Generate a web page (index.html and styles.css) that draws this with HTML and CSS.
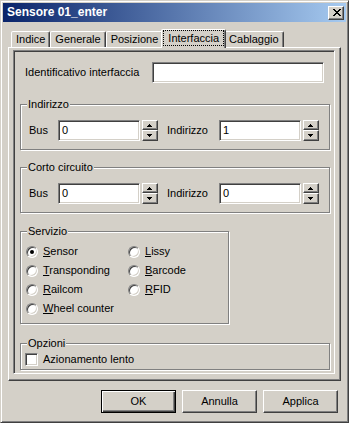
FILE: index.html
```html
<!DOCTYPE html>
<html lang="it">
<head>
<meta charset="utf-8">
<title>Sensore 01_enter</title>
<link rel="stylesheet" href="styles.css">
</head>
<body>
<div class="window">
  <div class="titlebar">
    <span class="title">Sensore 01_enter</span>
    <span class="close" aria-label="Chiudi">
      <svg width="8" height="7" viewBox="0 0 8 7"><path d="M0 0h2v1H0zM6 0h2v1H6zM1 1h2v1H1zM5 1h2v1H5zM2 2h4v1H2zM3 3h2v1H3zM2 4h4v1H2zM1 5h2v1H1zM5 5h2v1H5zM0 6h2v1H0zM6 6h2v1H6z" fill="#000"/></svg>
    </span>
  </div>
  <div class="body">
    <div class="tabs">
      <div class="tab">Indice</div>
      <div class="tab">Generale</div>
      <div class="tab">Posizione</div>
      <div class="tab active"><span class="focus">Interfaccia</span></div>
      <div class="tab">Cablaggio</div>
    </div>
    <div class="panel">
      <div class="page">
        <div class="id-row">
          <span class="id-label">Identificativo interfaccia</span>
          <span class="edit wide"></span>
        </div>

        <div class="group g-addr">
          <span class="group-title">Indirizzo</span>
          <div class="spin-row">
            <span class="lbl-bus">Bus</span>
            <span class="edit">0</span>
            <span class="spin">
              <span class="spin-btn up"><svg width="5" height="3" viewBox="0 0 5 3"><path d="M2 0h1v1h1v1h1v1H0V2h1V1h1z" fill="#000"/></svg></span>
              <span class="spin-btn down"><svg width="5" height="3" viewBox="0 0 5 3"><path d="M0 0h5v1H4v1H3v1H2V2H1V1H0z" fill="#000"/></svg></span>
            </span>
            <span class="lbl-ind">Indirizzo</span>
            <span class="edit">1</span>
            <span class="spin">
              <span class="spin-btn up"><svg width="5" height="3" viewBox="0 0 5 3"><path d="M2 0h1v1h1v1h1v1H0V2h1V1h1z" fill="#000"/></svg></span>
              <span class="spin-btn down"><svg width="5" height="3" viewBox="0 0 5 3"><path d="M0 0h5v1H4v1H3v1H2V2H1V1H0z" fill="#000"/></svg></span>
            </span>
          </div>
        </div>

        <div class="group g-short">
          <span class="group-title">Corto circuito</span>
          <div class="spin-row">
            <span class="lbl-bus">Bus</span>
            <span class="edit">0</span>
            <span class="spin">
              <span class="spin-btn up"><svg width="5" height="3" viewBox="0 0 5 3"><path d="M2 0h1v1h1v1h1v1H0V2h1V1h1z" fill="#000"/></svg></span>
              <span class="spin-btn down"><svg width="5" height="3" viewBox="0 0 5 3"><path d="M0 0h5v1H4v1H3v1H2V2H1V1H0z" fill="#000"/></svg></span>
            </span>
            <span class="lbl-ind">Indirizzo</span>
            <span class="edit">0</span>
            <span class="spin">
              <span class="spin-btn up"><svg width="5" height="3" viewBox="0 0 5 3"><path d="M2 0h1v1h1v1h1v1H0V2h1V1h1z" fill="#000"/></svg></span>
              <span class="spin-btn down"><svg width="5" height="3" viewBox="0 0 5 3"><path d="M0 0h5v1H4v1H3v1H2V2H1V1H0z" fill="#000"/></svg></span>
            </span>
          </div>
        </div>

        <div class="group g-serv">
          <span class="group-title">Servizio</span>
          <div class="radios">
            <label class="opt"><span class="radio checked"></span><span><u>S</u>ensor</span></label>
            <label class="opt"><span class="radio"></span><span><u>T</u>ransponding</span></label>
            <label class="opt"><span class="radio"></span><span><u>R</u>ailcom</span></label>
            <label class="opt"><span class="radio"></span><span><u>W</u>heel counter</span></label>
            <label class="opt"><span class="radio"></span><span><u>L</u>issy</span></label>
            <label class="opt"><span class="radio"></span><span><u>B</u>arcode</span></label>
            <label class="opt"><span class="radio"></span><span><u>R</u>FID</span></label>
          </div>
        </div>

        <div class="group g-opt">
          <span class="group-title">Opzioni</span>
          <label class="opt check-row"><span class="checkbox"></span><span>Azionamento lento</span></label>
        </div>
      </div>
    </div>
    <div class="buttons">
      <span class="btn default">OK</span>
      <span class="btn">Annulla</span>
      <span class="btn">Applica</span>
    </div>
  </div>
</div>
</body>
</html>
```

FILE: styles.css
```css
* { box-sizing: border-box; }

html, body {
  margin: 0;
  padding: 0;
  background: #d4d0c8;
}

body {
  font-family: "Liberation Sans", Arial, sans-serif;
  font-size: 11px;
  line-height: 13px;
  color: #000;
}

.window {
  width: 349px;
  height: 423px;
  border: 1px solid;
  border-color: #d4d0c8 #404040 #404040 #d4d0c8;
  box-shadow: inset 1px 1px #fff, inset -1px -1px #808080;
  padding: 2px;
  background: #d4d0c8;
  display: flex;
  flex-direction: column;
}

/* ---------- title bar ---------- */
.titlebar {
  height: 19px;
  flex: none;
  background: linear-gradient(to right, #0a246a, #a6caf0);
  display: flex;
  align-items: center;
  padding: 0 2px 0 4px;
  color: #fff;
  font-weight: bold;
  font-size: 12px;
}

.title {
  flex: 1;
  white-space: nowrap;
}

.close {
  width: 16px;
  height: 14px;
  background: #d4d0c8;
  border: 1px solid;
  border-color: #fff #404040 #404040 #fff;
  box-shadow: inset -1px -1px #808080;
  display: flex;
  align-items: center;
  justify-content: center;
  padding-left: 1px;
}

.close svg { display: block; }

/* ---------- body ---------- */
.body {
  flex: 1;
  padding: 7px 5px 0;
  display: flex;
  flex-direction: column;
}

.tabs {
  display: flex;
  align-items: flex-end;
  height: 18px;
  padding-left: 3px;
  flex: none;
}

.tab {
  height: 16px;
  padding: 0 4px;
  border: 1px solid;
  border-bottom: 0;
  border-color: #fff #404040 transparent #fff;
  border-radius: 2px 2px 0 0;
  box-shadow: inset -1px 0 #808080;
  line-height: 14px;
  white-space: nowrap;
  background: #d4d0c8;
}

.tab.active {
  height: 19px;
  margin: 0 -2px -1px;
  padding: 0 1px;
  position: relative;
  z-index: 1;
}

.focus {
  display: block;
  border: 1px dotted #000;
  padding: 0 4px;
  height: 16px;
  line-height: 14px;
}

.panel {
  height: 334px;
  flex: none;
  border: 1px solid;
  border-color: #fff #404040 #404040 #fff;
  box-shadow: inset -1px -1px #808080;
  padding: 2px 5px 6px 4px;
  display: flex;
}

.page {
  flex: 1;
  border: 1px solid;
  border-color: #808080 #fff #fff #808080;
  box-shadow: inset 1px 1px #404040, inset -1px -1px #d4d0c8;
}

/* ---------- controls ---------- */
.edit {
  display: flex;
  align-items: center;
  width: 82px;
  height: 21px;
  padding: 0 3px;
  background: #fff;
  border: 1px solid;
  border-color: #808080 #fff #fff #808080;
  box-shadow: inset 1px 1px #404040, inset -1px -1px #d4d0c8;
  flex: none;
}

.edit.wide { width: 172px; }

.id-row {
  display: flex;
  align-items: center;
  height: 21px;
  margin: 11px 0 0 11px;
}

.id-label { width: 127px; white-space: nowrap; }

.group {
  position: relative;
  margin-left: 6px;
  width: 310px;
  border: 1px solid #808080;
  box-shadow: inset 1px 1px #fff, 1px 1px #fff;
}

.group-title {
  position: absolute;
  top: -7px;
  left: 6px;
  padding: 0 1px;
  background: #d4d0c8;
  line-height: 13px;
  white-space: nowrap;
}

.g-addr { margin-top: 21px; padding: 15px 0 8px 8px; }
.g-short { margin-top: 17px; padding: 15px 0 8px 8px; }
.g-serv { margin-top: 18px; width: 209px; padding: 10px 0 5px 5px; }
.g-opt { margin-top: 19px; padding: 9px 0 3px 4px; }

.spin-row {
  display: flex;
  align-items: center;
  height: 21px;
}

.lbl-bus { width: 29px; }
.lbl-ind { width: 52px; margin-left: 9px; }

.spin {
  display: flex;
  flex-direction: column;
  width: 16px;
  height: 21px;
  margin-left: 2px;
  flex: none;
}

.spin-btn {
  border: 1px solid;
  border-color: #fff #404040 #404040 #fff;
  box-shadow: inset -1px -1px #808080;
  display: flex;
  align-items: center;
  justify-content: center;
  padding-right: 1px;
}

.spin-btn.up { height: 10px; }
.spin-btn.down { height: 11px; }
.spin-btn svg { display: block; }

.radios {
  display: grid;
  grid-template-columns: 102px auto;
  grid-template-rows: repeat(4, 19px);
  grid-auto-flow: column;
}

.opt {
  display: flex;
  align-items: center;
  gap: 5px;
  white-space: nowrap;
}

.radio {
  width: 12px;
  height: 12px;
  flex: none;
  border-radius: 50%;
  background: #fff;
  border: 1px solid;
  border-color: #808080 #fff #fff #808080;
  box-shadow: inset 1px 1px #404040, inset -1px -1px #d4d0c8;
  display: flex;
  align-items: center;
  justify-content: center;
}

.radio.checked::after {
  content: "";
  width: 4px;
  height: 4px;
  border-radius: 50%;
  background: #000;
}

.check-row { height: 13px; }

.checkbox {
  width: 13px;
  height: 13px;
  flex: none;
  background: #fff;
  border: 1px solid;
  border-color: #808080 #fff #fff #808080;
  box-shadow: inset 1px 1px #404040, inset -1px -1px #d4d0c8;
}

u { text-decoration: underline; text-underline-offset: 1px; }

/* ---------- buttons ---------- */
.buttons {
  display: flex;
  justify-content: flex-end;
  gap: 6px;
  margin-top: 9px;
  padding-right: 3px;
}

.btn {
  width: 75px;
  height: 23px;
  display: flex;
  align-items: center;
  justify-content: center;
  border: 1px solid;
  border-color: #fff #404040 #404040 #fff;
  box-shadow: inset -1px -1px #808080;
}

.btn.default {
  border-color: #000;
  box-shadow: inset 1px 1px #fff, inset -1px -1px #404040, inset -2px -2px #808080;
}
```
